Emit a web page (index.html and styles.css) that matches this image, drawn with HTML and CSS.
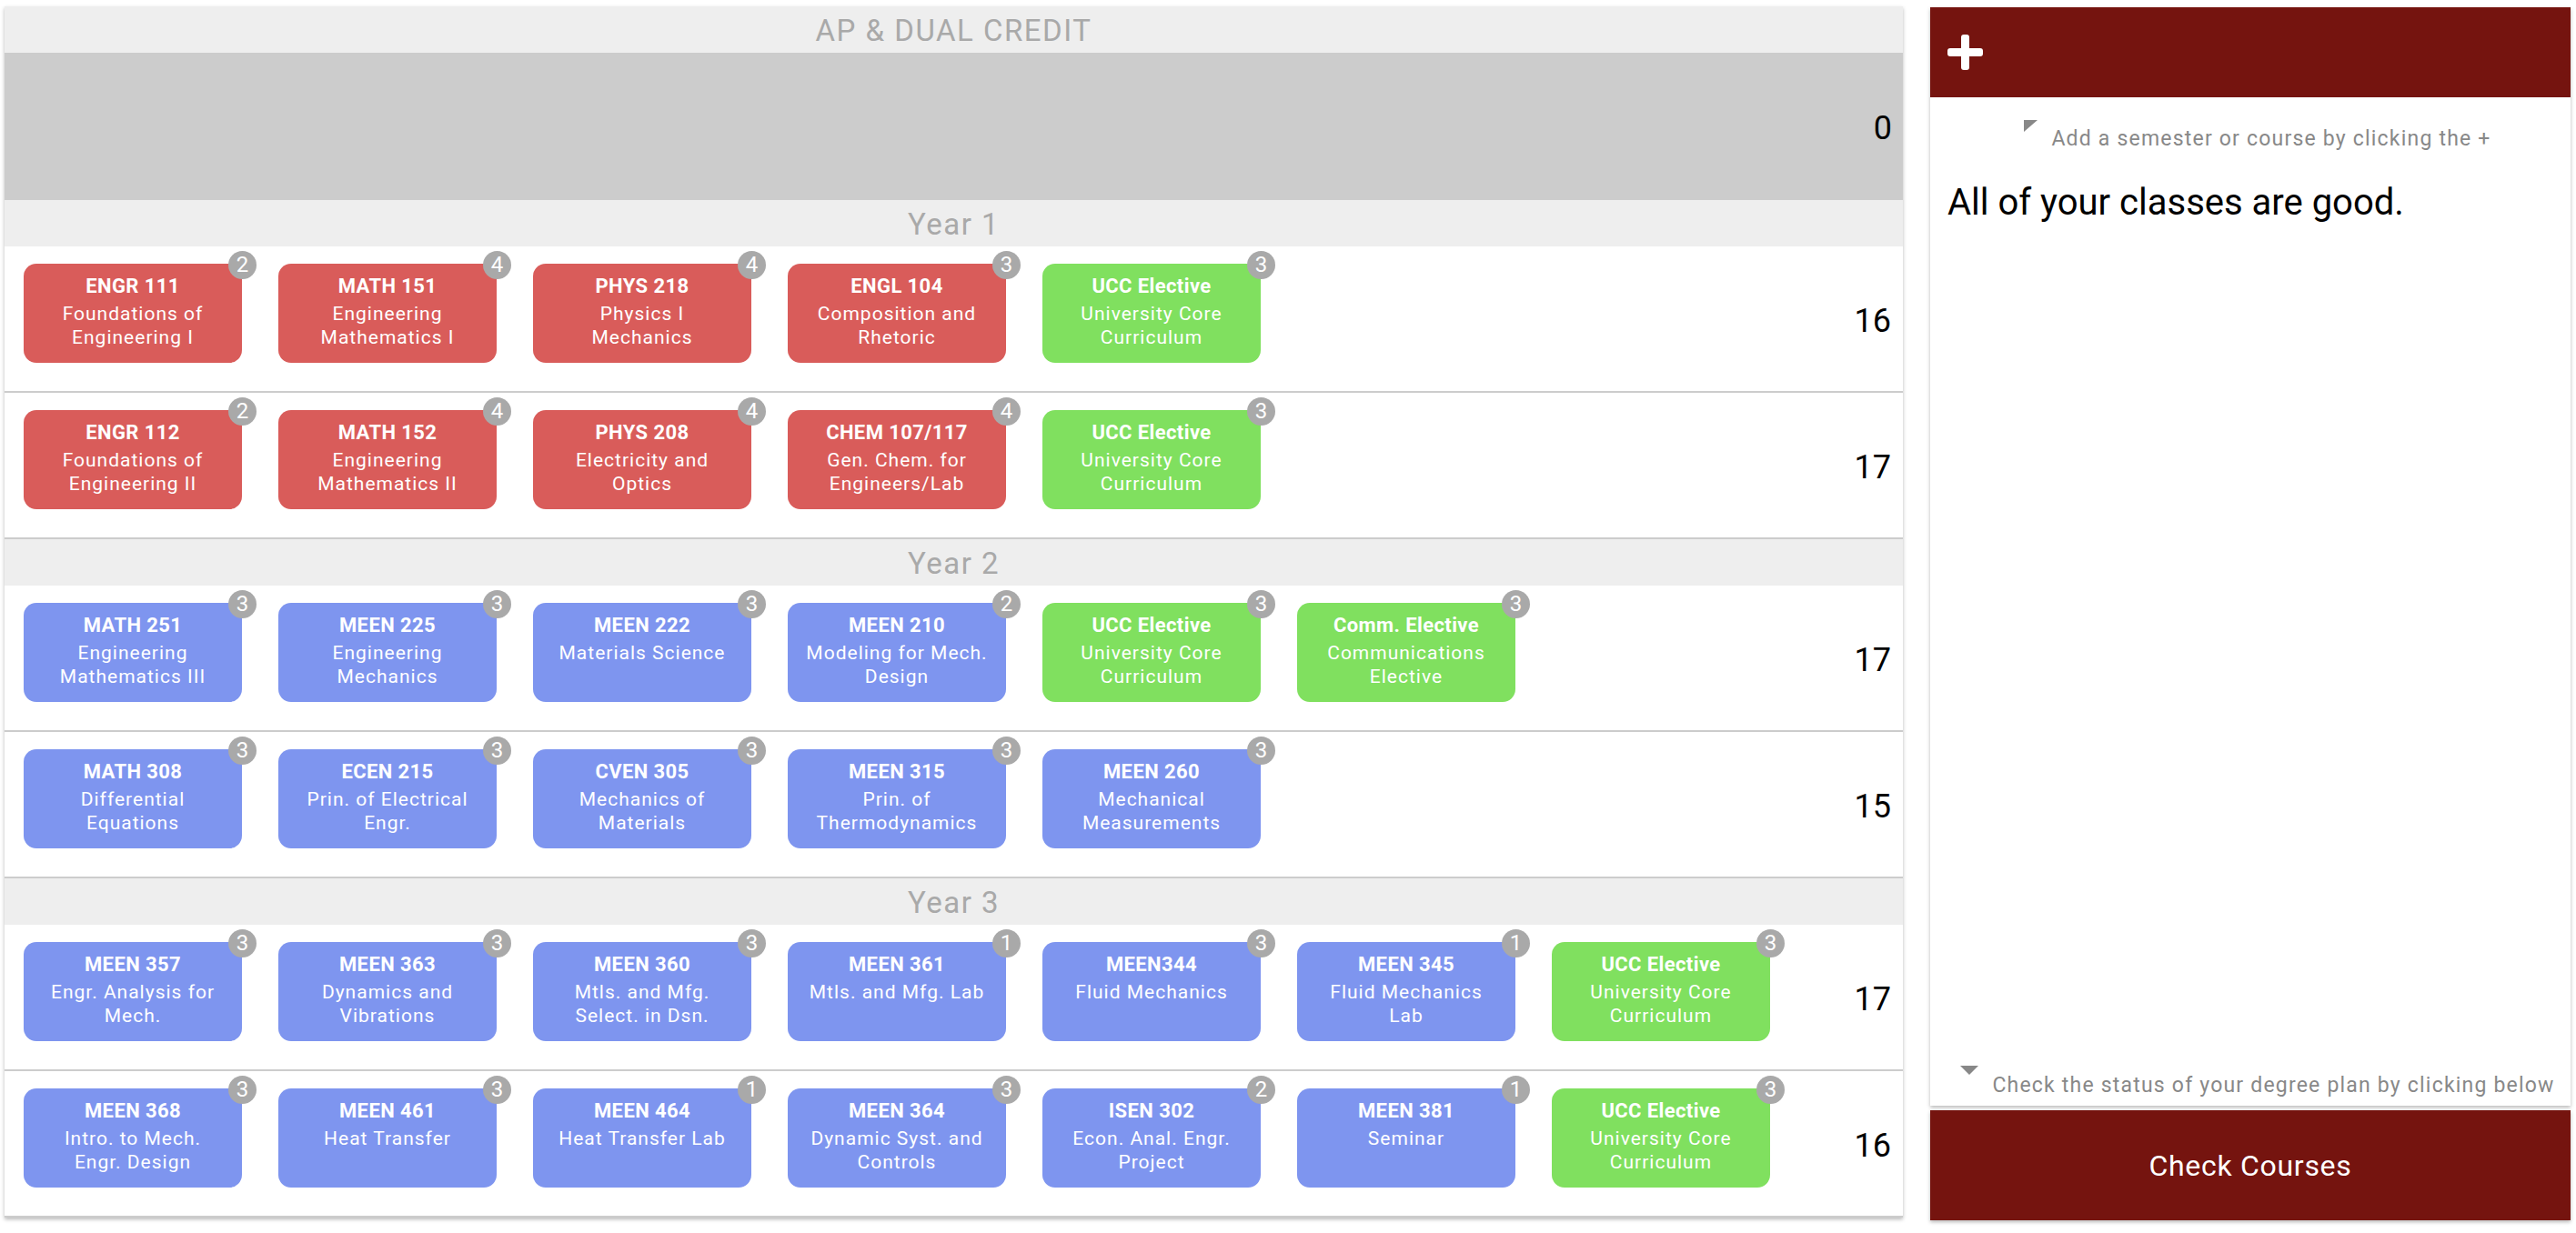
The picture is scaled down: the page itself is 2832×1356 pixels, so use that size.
FILE: index.html
```html
<!DOCTYPE html>
<html lang="en">
<head>
<meta charset="utf-8">
<title>Degree Planner</title>
<link rel="stylesheet" href="styles.css">
</head>
<body>
<div class="app">
  <main class="plan">
    <div class="band">AP &amp; DUAL CREDIT</div>
    <div class="ap-area"><span class="hours">0</span></div>

    <div class="band">Year 1</div>
    <div class="semester">
      <div class="cards">
        <div class="course red"><span class="badge">2</span><div class="code">ENGR 111</div><div class="name">Foundations of<br>Engineering I</div></div>
        <div class="course red"><span class="badge">4</span><div class="code">MATH 151</div><div class="name">Engineering<br>Mathematics I</div></div>
        <div class="course red"><span class="badge">4</span><div class="code">PHYS 218</div><div class="name">Physics I<br>Mechanics</div></div>
        <div class="course red"><span class="badge">3</span><div class="code">ENGL 104</div><div class="name">Composition and<br>Rhetoric</div></div>
        <div class="course green"><span class="badge">3</span><div class="code">UCC Elective</div><div class="name">University Core<br>Curriculum</div></div>
      </div>
      <span class="hours">16</span>
    </div>
    <div class="semester">
      <div class="cards">
        <div class="course red"><span class="badge">2</span><div class="code">ENGR 112</div><div class="name">Foundations of<br>Engineering II</div></div>
        <div class="course red"><span class="badge">4</span><div class="code">MATH 152</div><div class="name">Engineering<br>Mathematics II</div></div>
        <div class="course red"><span class="badge">4</span><div class="code">PHYS 208</div><div class="name">Electricity and<br>Optics</div></div>
        <div class="course red"><span class="badge">4</span><div class="code">CHEM 107/117</div><div class="name">Gen. Chem. for<br>Engineers/Lab</div></div>
        <div class="course green"><span class="badge">3</span><div class="code">UCC Elective</div><div class="name">University Core<br>Curriculum</div></div>
      </div>
      <span class="hours">17</span>
    </div>

    <div class="band">Year 2</div>
    <div class="semester">
      <div class="cards">
        <div class="course blue"><span class="badge">3</span><div class="code">MATH 251</div><div class="name">Engineering<br>Mathematics III</div></div>
        <div class="course blue"><span class="badge">3</span><div class="code">MEEN 225</div><div class="name">Engineering<br>Mechanics</div></div>
        <div class="course blue"><span class="badge">3</span><div class="code">MEEN 222</div><div class="name">Materials Science</div></div>
        <div class="course blue"><span class="badge">2</span><div class="code">MEEN 210</div><div class="name">Modeling for Mech.<br>Design</div></div>
        <div class="course green"><span class="badge">3</span><div class="code">UCC Elective</div><div class="name">University Core<br>Curriculum</div></div>
        <div class="course green"><span class="badge">3</span><div class="code">Comm. Elective</div><div class="name">Communications<br>Elective</div></div>
      </div>
      <span class="hours">17</span>
    </div>
    <div class="semester">
      <div class="cards">
        <div class="course blue"><span class="badge">3</span><div class="code">MATH 308</div><div class="name">Differential<br>Equations</div></div>
        <div class="course blue"><span class="badge">3</span><div class="code">ECEN 215</div><div class="name">Prin. of Electrical<br>Engr.</div></div>
        <div class="course blue"><span class="badge">3</span><div class="code">CVEN 305</div><div class="name">Mechanics of<br>Materials</div></div>
        <div class="course blue"><span class="badge">3</span><div class="code">MEEN 315</div><div class="name">Prin. of<br>Thermodynamics</div></div>
        <div class="course blue"><span class="badge">3</span><div class="code">MEEN 260</div><div class="name">Mechanical<br>Measurements</div></div>
      </div>
      <span class="hours">15</span>
    </div>

    <div class="band">Year 3</div>
    <div class="semester">
      <div class="cards">
        <div class="course blue"><span class="badge">3</span><div class="code">MEEN 357</div><div class="name">Engr. Analysis for<br>Mech.</div></div>
        <div class="course blue"><span class="badge">3</span><div class="code">MEEN 363</div><div class="name">Dynamics and<br>Vibrations</div></div>
        <div class="course blue"><span class="badge">3</span><div class="code">MEEN 360</div><div class="name">Mtls. and Mfg.<br>Select. in Dsn.</div></div>
        <div class="course blue"><span class="badge">1</span><div class="code">MEEN 361</div><div class="name">Mtls. and Mfg. Lab</div></div>
        <div class="course blue"><span class="badge">3</span><div class="code">MEEN344</div><div class="name">Fluid Mechanics</div></div>
        <div class="course blue"><span class="badge">1</span><div class="code">MEEN 345</div><div class="name">Fluid Mechanics<br>Lab</div></div>
        <div class="course green"><span class="badge">3</span><div class="code">UCC Elective</div><div class="name">University Core<br>Curriculum</div></div>
      </div>
      <span class="hours">17</span>
    </div>
    <div class="semester">
      <div class="cards">
        <div class="course blue"><span class="badge">3</span><div class="code">MEEN 368</div><div class="name">Intro. to Mech.<br>Engr. Design</div></div>
        <div class="course blue"><span class="badge">3</span><div class="code">MEEN 461</div><div class="name">Heat Transfer</div></div>
        <div class="course blue"><span class="badge">1</span><div class="code">MEEN 464</div><div class="name">Heat Transfer Lab</div></div>
        <div class="course blue"><span class="badge">3</span><div class="code">MEEN 364</div><div class="name">Dynamic Syst. and<br>Controls</div></div>
        <div class="course blue"><span class="badge">2</span><div class="code">ISEN 302</div><div class="name">Econ. Anal. Engr.<br>Project</div></div>
        <div class="course blue"><span class="badge">1</span><div class="code">MEEN 381</div><div class="name">Seminar</div></div>
        <div class="course green"><span class="badge">3</span><div class="code">UCC Elective</div><div class="name">University Core<br>Curriculum</div></div>
      </div>
      <span class="hours">16</span>
    </div>
  </main>

  <aside class="side">
    <section class="side-card">
      <header class="side-head">
        <svg class="plus" width="39" height="39" viewBox="0 0 39 39" aria-hidden="true">
          <rect x="0" y="15" width="39" height="9" rx="3" fill="#fff"/>
          <rect x="15" y="0" width="9" height="39" rx="3" fill="#fff"/>
        </svg>
      </header>
      <div class="side-body">
        <div class="hint">
          <svg class="tri" width="15" height="13" viewBox="0 0 15 13" aria-hidden="true"><polygon points="0,0 15,0 0,13" fill="#888"/></svg>
          <span class="hint-text">Add a semester or course by clicking the +</span>
        </div>
        <p class="status">All of your classes are good.</p>
        <div class="hint hint-bottom">
          <svg class="tri" width="20" height="10" viewBox="0 0 20 10" aria-hidden="true"><polygon points="0,0 20,0 10,10" fill="#888"/></svg>
          <span class="hint-text">Check the status of your degree plan by clicking below</span>
        </div>
      </div>
    </section>
    <button class="check">Check Courses</button>
  </aside>
</div>
</body>
</html>
```

FILE: styles.css
```css
* { box-sizing: border-box; }

html, body {
  margin: 0;
  padding: 0;
  background: #ffffff;
  font-family: Roboto, "Liberation Sans", Arial, sans-serif;
}

.app {
  display: flex;
  gap: 30px;
  padding: 7px 6px 0 5px;
  height: 1356px;
}

.plan {
  flex: 0 0 2087px;
  align-self: flex-start;
  background: #fff;
  box-shadow: 0 2px 4px rgba(0,0,0,0.28);
}

.band {
  height: 51px;
  line-height: 51px;
  padding-top: 1px;
  background: #eeeeee;
  color: #a9a9a9;
  font-size: 33px;
  letter-spacing: 1.5px;
  text-align: center;
}

.ap-area {
  height: 162px;
  background: #cccccc;
  display: flex;
  align-items: center;
  justify-content: flex-end;
  padding-right: 12px;
}

.hours {
  font-size: 36px;
  color: #000;
  line-height: 1;
  padding-top: 4px;
}

.semester {
  height: 161px;
  border-bottom: 2px solid #cccccc;
  display: flex;
  align-items: center;
  padding: 0 13px 0 21px;
}

.cards {
  flex: 1;
  align-self: flex-start;
  padding-top: 19px;
  display: flex;
  gap: 40px;
}

.course {
  position: relative;
  width: 240px;
  height: 109px;
  border-radius: 14px;
  color: #fff;
  text-align: center;
  padding-top: 10px;
  white-space: nowrap;
}

.red { background: #d95c5a; }
.green { background: #80e05f; }
.blue { background: #7e95ef; }

.code {
  font-weight: 700;
  font-size: 22px;
  line-height: 30px;
  letter-spacing: 0.4px;
}

.name {
  margin-top: 2px;
  font-size: 21px;
  line-height: 26px;
  letter-spacing: 1px;
}

.badge {
  position: absolute;
  top: -14px;
  right: -16px;
  width: 31px;
  height: 31px;
  border-radius: 50%;
  background: #a9a9a9;
  color: #fff;
  font-size: 24px;
  line-height: 31px;
  text-align: center;
}

.side {
  flex: 0 0 704px;
  display: flex;
  flex-direction: column;
  gap: 5px;
  padding-top: 1px;
}

.side-card {
  height: 1208px;
  background: #fff;
  box-shadow: 0 2px 4px rgba(0,0,0,0.28);
  display: flex;
  flex-direction: column;
}

.side-head {
  height: 99px;
  background: #75140f;
  display: flex;
  align-items: center;
  padding-left: 19px;
}

.plus { display: block; }

.side-body {
  flex: 1;
  display: flex;
  flex-direction: column;
  padding: 25px 3px 9px 19px;
}

.hint {
  display: flex;
  justify-content: center;
  align-items: flex-start;
  gap: 15px;
}

.tri { display: block; flex: none; }

.hint-text {
  padding-top: 7px;
  font-size: 23px;
  line-height: 27px;
  letter-spacing: 1.2px;
  color: #888;
}

.hint-bottom { margin-top: auto; }
.hint-bottom .hint-text { padding-top: 8px; }

.status {
  margin: 33px 0 0;
  font-size: 40px;
  line-height: 47px;
  color: #000;
}

.check {
  height: 121px;
  border: 0;
  background: #75140f;
  color: #fff;
  font-family: Roboto, "Liberation Sans", Arial, sans-serif;
  font-size: 32px;
  letter-spacing: 0.7px;
  box-shadow: 0 2px 4px rgba(0,0,0,0.28);
  cursor: pointer;
}
```
